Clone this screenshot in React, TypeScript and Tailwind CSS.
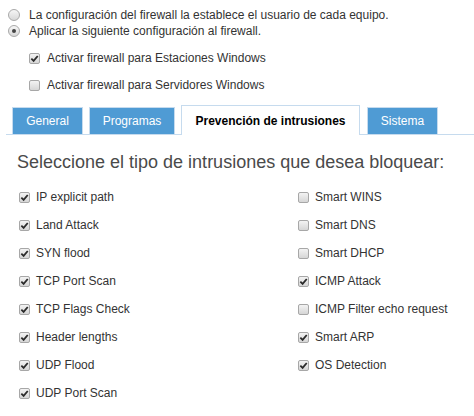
import { useState } from "react";

const left = [
  "IP explicit path",
  "Land Attack",
  "SYN flood",
  "TCP Port Scan",
  "TCP Flags Check",
  "Header lengths",
  "UDP Flood",
  "UDP Port Scan",
];

const right: [string, boolean][] = [
  ["Smart WINS", false],
  ["Smart DNS", false],
  ["Smart DHCP", false],
  ["ICMP Attack", true],
  ["ICMP Filter echo request", false],
  ["Smart ARP", true],
  ["OS Detection", true],
];

function Box({ checked }: { checked: boolean }) {
  return (
    <span className="flex h-[11px] w-[11px] shrink-0 items-center justify-center rounded-[2px] border border-[#a7a7a7] bg-gradient-to-b from-[#f3f3f3] to-[#d6d6d6]">
      {checked && (
        <svg viewBox="0 0 10 10" className="h-[9px] w-[9px]">
          <path d="M1.5 5.2 L4 7.6 L8.6 2.2" fill="none" stroke="#2b2b2b" strokeWidth="2" />
        </svg>
      )}
    </span>
  );
}

function Radio({ on }: { on: boolean }) {
  return (
    <span className="flex h-[12px] w-[12px] shrink-0 items-center justify-center rounded-full border border-[#a9a9a9] bg-gradient-to-b from-[#f6f6f6] to-[#d8d8d8]">
      {on && <span className="h-[4px] w-[4px] rounded-full bg-[#444]" />}
    </span>
  );
}

export default function App() {
  const [tab] = useState("Prevención de intrusiones");
  const tabs = [
    { name: "General", w: "w-[71px]" },
    { name: "Programas", w: "w-[86px]" },
    { name: "Prevención de intrusiones", w: "w-[179px]" },
    { name: "Sistema", w: "w-[71px]" },
  ];

  return (
    <div className="h-[416px] w-[474px] bg-white pt-[7px] text-[12px] text-[#333]" style={{ fontFamily: '"Liberation Sans", Arial, sans-serif' }}>
      {/* ── firewall mode ── */}
      <div className="pl-[8px]">
        <div className="flex h-[16px] items-center gap-[9px]">
          <Radio on={false} />
          <span>La configuración del firewall la establece el usuario de cada equipo.</span>
        </div>
        <div className="flex h-[16px] items-center gap-[9px]">
          <Radio on />
          <span>Aplicar la siguiente configuración al firewall.</span>
        </div>
        <div className="mt-[11px] flex flex-col gap-[11px] pl-[21px]">
          <div className="flex h-[16px] items-center gap-[7px]">
            <Box checked />
            <span>Activar firewall para Estaciones Windows</span>
          </div>
          <div className="flex h-[16px] items-center gap-[7px]">
            <Box checked={false} />
            <span>Activar firewall para Servidores Windows</span>
          </div>
        </div>
      </div>

      {/* ── tabs ── */}
      <div className="ml-[6px] mt-[12px] flex items-end gap-[6px] border-b border-[#c6dbee] pl-[6px]">
        {tabs.map((t) =>
          t.name === tab ? (
            <div key={t.name} className={`${t.w} -mb-px mr-[1px] flex h-[30px] items-center justify-center border border-b-0 border-[#c6dbee] bg-white text-[12px] font-bold text-black`}>
              {t.name}
            </div>
          ) : (
            <div key={t.name} className={`${t.w} flex h-[27px] items-center justify-center border border-b-0 border-[#c6dbee] bg-[#4f9bd4] text-white`}>
              {t.name}
            </div>
          ),
        )}
      </div>

      {/* ── intrusions ── */}
      <div className="pl-[17px] pt-[15px] text-[18px] leading-[24px] text-[#4a4a4a]">
        Seleccione el tipo de intrusiones que desea bloquear:
      </div>
      <div className="mt-[15px] grid grid-cols-[279px_1fr] pl-[19px]">
        <div className="flex flex-col gap-[12px]">
          {left.map((l) => (
            <div key={l} className="flex h-[16px] items-center gap-[6px]">
              <Box checked />
              <span>{l}</span>
            </div>
          ))}
        </div>
        <div className="flex flex-col gap-[12px]">
          {right.map(([l, c]) => (
            <div key={l} className="flex h-[16px] items-center gap-[6px]">
              <Box checked={c} />
              <span>{l}</span>
            </div>
          ))}
        </div>
      </div>
    </div>
  );
}
